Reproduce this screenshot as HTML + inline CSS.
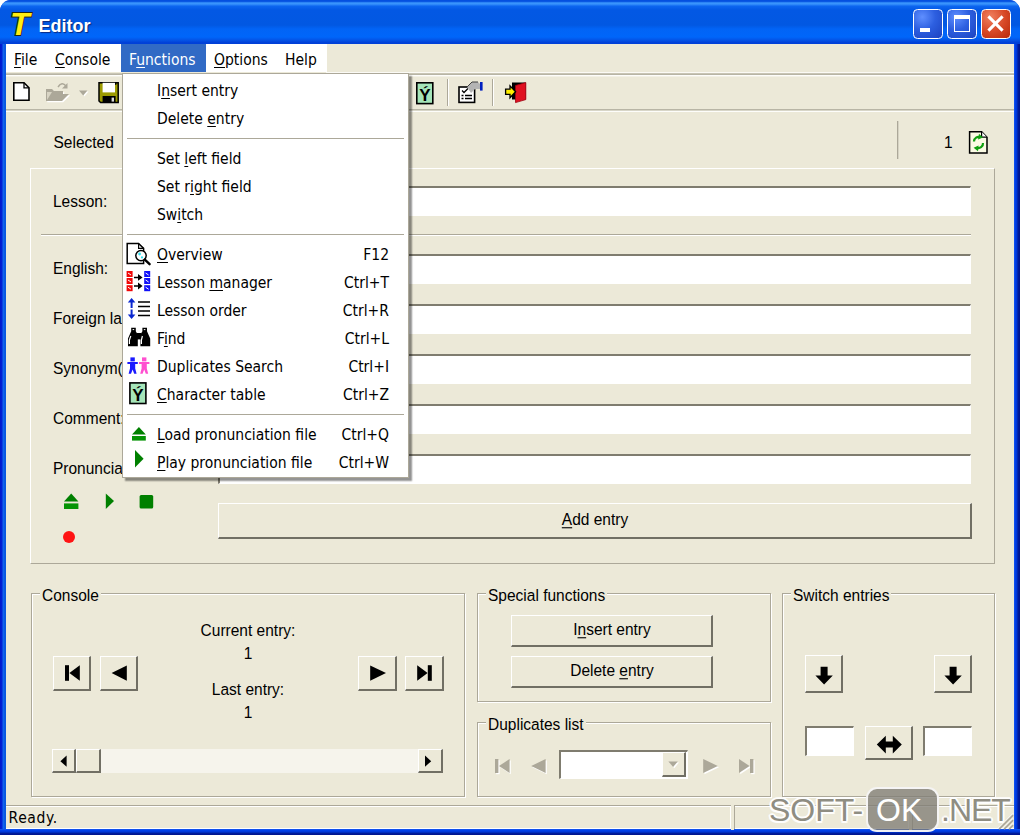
<!DOCTYPE html>
<html><head><meta charset="utf-8"><title>Editor</title>
<style>
html,body{margin:0;padding:0;}
body{width:1020px;height:835px;position:relative;overflow:hidden;background:#fff;font-family:"Liberation Sans",sans-serif;font-size:15.5px;color:#000;}
.abs,.abs *{position:absolute;}
#win{position:absolute;left:0;top:0;width:1020px;height:835px;background:#0842d8;border-radius:11px 11px 0 0;overflow:hidden;}
#bl{position:absolute;left:0;top:44px;width:6px;height:791px;background:linear-gradient(to right,#0019cf 0%,#0019cf 22%,#0c4ae4 45%,#1468ec 60%,#0858e2 78%,#0858e0 100%);}
#br{position:absolute;left:1014px;top:44px;width:6px;height:791px;background:linear-gradient(to right,#1858ee 0%,#0040ea 22%,#0036d4 45%,#001c9c 68%,#00138a 100%);}
#bb{position:absolute;left:0;top:829px;width:1020px;height:6px;background:linear-gradient(to bottom,#1858ee 0%,#0040ea 25%,#0036d4 50%,#001c9c 72%,#00138a 100%);}
#title{position:absolute;left:0;top:0;width:1020px;height:44px;background:linear-gradient(to bottom,#0450e0 0%,#0450e0 3%,#3894fc 6.5%,#3a94fc 9%,#0c66f0 14%,#0358e4 23%,#0258e2 57%,#0264f6 66%,#0066fa 84%,#0454e6 91%,#0040d8 97%,#0040d8 100%);}
#client{position:absolute;left:6px;top:44px;width:1008px;height:785px;background:#ece9d8;}
.t{position:absolute;white-space:nowrap;line-height:20px;height:20px;}
.mt{font-family:"DejaVu Sans Condensed","Liberation Sans",sans-serif;font-size:15.5px;}
u{text-decoration:underline;text-underline-offset:2px;}
.edit{position:absolute;background:#fff;border-top:2px solid #7f7c6f;border-left:2px solid #7f7c6f;border-right:1px solid #fff;border-bottom:1px solid #fff;box-sizing:border-box;}
.btn{position:absolute;box-sizing:border-box;background:#ece9d8;border-top:1px solid #fff;border-left:1px solid #fff;border-right:2px solid #716f64;border-bottom:2px solid #716f64;}
.grp{position:absolute;box-sizing:border-box;border:1px solid #aca899;box-shadow:1px 1px 0 #fff, inset 1px 1px 0 #fff;}
.grp>span{position:absolute;left:8px;top:-8px;background:#ece9d8;padding:0 2px;line-height:20px;}

.mi{position:relative;height:28px;line-height:28px;font-family:"DejaVu Sans Condensed","Liberation Sans",sans-serif;font-size:15.5px;white-space:nowrap;}
.mi .ml{position:absolute;left:34px;top:0px;}
.mi .mk{position:absolute;right:19px;top:0px;}
.msep{height:12px;position:relative;}
.msep:after{content:"";position:absolute;left:4px;right:4px;top:5px;height:1px;background:#aca899;}

.wb{position:absolute;top:9px;width:29.5px;height:30px;box-sizing:border-box;border:1.5px solid #fff;border-radius:4.5px;background:radial-gradient(circle at 30% 25%,#5f8fff 0%,#2d5fe0 45%,#1c42c0 100%);}
.wc{background:radial-gradient(circle at 30% 25%,#f08060 0%,#d84a28 50%,#b82808 100%);}

.wm{position:absolute;top:748px;font-family:"Liberation Sans",sans-serif;font-size:32px;line-height:36px;white-space:nowrap;color:#8f8d82;text-shadow:-1.5px -1.5px 0 rgba(255,255,255,.85),1.5px -1.5px 0 rgba(255,255,255,.85),-1.5px 1.5px 0 rgba(255,255,255,.85),1.5px 1.5px 0 rgba(255,255,255,.85),0 2px 0 rgba(255,255,255,.85),0 -2px 0 rgba(255,255,255,.85),2px 0 0 rgba(255,255,255,.85),-2px 0 0 rgba(255,255,255,.85);}

.t{transform:scaleY(1.1);transform-origin:0 15px;}
.grp>span{transform:scaleY(1.1);transform-origin:0 15px;}
.mt,#title .t{transform:none;}
</style></head><body>
<div id="win">
<div id="title">
 <svg style="position:absolute;left:8px;top:8px;" width="28" height="30" viewBox="0 0 28 30"><text x="2" y="27.4" font-family="Liberation Sans, sans-serif" font-weight="bold" font-style="italic" font-size="32" fill="#ffee10" stroke="#26260a" stroke-width="2" paint-order="stroke">T</text></svg>
 <div class="t" style="left:38.5px;top:16px;font-family:'Liberation Sans',sans-serif;font-weight:bold;font-size:18px;color:#fff;text-shadow:1px 1px 1px #0a2a80;">Editor</div>
 <div class="wb" style="left:913px;"><div style="position:absolute;left:6px;top:18px;width:10px;height:4px;background:#fff;"></div></div>
 <div class="wb" style="left:947px;"><div style="position:absolute;left:5.5px;top:5px;width:16px;height:16.5px;box-sizing:border-box;border:1.5px solid #fff;border-top-width:4.5px;"></div></div>
 <div class="wb wc" style="left:981px;"><svg style="position:absolute;left:0;top:0;" width="27" height="27" viewBox="0 0 27 27"><path d="M6.4,6.4 L20.6,20.6 M20.6,6.4 L6.4,20.6" stroke="#fff" stroke-width="3"/></svg></div>
</div>
<div id="bl"></div><div id="br"></div><div id="bb"></div>
<div id="client">
<!-- menubar -->
<div style="position:absolute;left:0;top:0;width:321px;height:28px;background:#fff;"></div>
<div style="position:absolute;left:115px;top:0px;width:85px;height:28px;background:#316ac5;"></div>
<div class="t mt" style="left:8px;top:6px;"><u>F</u>ile</div>
<div class="t mt" style="left:49px;top:6px;"><u>C</u>onsole</div>
<div class="t mt" style="left:123px;top:6px;color:#fff;">F<u>u</u>nctions</div>
<div class="t mt" style="left:208px;top:6px;"><u>O</u>ptions</div>
<div class="t mt" style="left:279px;top:6px;">Help</div>
<!-- toolbar lines -->
<div style="position:absolute;left:320px;top:28px;width:688px;height:1px;background:#fbfaf5;"></div>
<div style="position:absolute;left:0;top:29px;width:1008px;height:1px;background:#c8c5b5;"></div>
<div style="position:absolute;left:0;top:30px;width:1008px;height:1px;background:#b8b5a5;"></div>
<div style="position:absolute;left:0;top:31px;width:1008px;height:1px;background:#fdfdfa;"></div>
<div style="position:absolute;left:0;top:32px;width:1008px;height:1px;background:#f3f1e6;"></div>
<div style="position:absolute;left:0;top:65px;width:1008px;height:1px;background:#b8b5a5;"></div>
<div style="position:absolute;left:0;top:66px;width:1008px;height:1px;background:#d8d6c8;"></div>
<div style="position:absolute;left:0;top:67px;width:1008px;height:1px;background:#fdfdfa;"></div>
<div id="tb"></div>
<!-- selected row -->
<div class="t" style="left:47.5px;top:89px;">Selected</div>
<div style="position:absolute;left:891px;top:77px;width:1px;height:38px;background:#aca899;"></div><div style="position:absolute;left:892px;top:77px;width:1px;height:38px;background:#d6d3c4;"></div>
<div class="t" style="left:938px;top:89px;">1</div>
<!-- main panel -->
<div style="position:absolute;left:24px;top:124px;width:965px;height:396px;box-sizing:border-box;border-top:1px solid #fff;border-left:1px solid #fff;border-right:1px solid #aca899;border-bottom:1px solid #aca899;"></div>
<div style="position:absolute;left:35px;top:190px;width:930px;height:1px;background:#aca899;"></div>
<div style="position:absolute;left:35px;top:191px;width:930px;height:1px;background:#fff;"></div>
<div class="t" style="left:47px;top:148px;">Lesson:</div>
<div class="t" style="left:47px;top:215px;">English:</div>
<div class="t" style="left:47px;top:265px;">Foreign language:</div>
<div class="t" style="left:47px;top:315px;">Synonym(s):</div>
<div class="t" style="left:47px;top:365px;">Comment:</div>
<div class="t" style="left:47px;top:415px;">Pronunciation:</div>
<div class="edit" style="left:212px;top:142px;width:753px;height:30px;"></div>
<div class="edit" style="left:212px;top:210px;width:753px;height:30px;"></div>
<div class="edit" style="left:212px;top:260px;width:753px;height:30px;"></div>
<div class="edit" style="left:212px;top:310px;width:753px;height:30px;"></div>
<div class="edit" style="left:212px;top:360px;width:753px;height:30px;"></div>
<div class="edit" style="left:212px;top:410px;width:753px;height:30px;"></div>
<div class="btn" style="left:212px;top:459px;width:754px;height:36px;"></div>
<div class="t" style="left:212px;top:466px;width:754px;text-align:center;"><u>A</u>dd entry</div>
<!-- console group -->
<div class="grp" style="left:25px;top:549px;width:434px;height:204px;"><span>Console</span></div>
<div class="t" style="left:142px;top:577px;width:200px;text-align:center;">Current entry:</div>
<div class="t" style="left:142px;top:600px;width:200px;text-align:center;">1</div>
<div class="t" style="left:142px;top:636px;width:200px;text-align:center;">Last entry:</div>
<div class="t" style="left:142px;top:659px;width:200px;text-align:center;">1</div>
<div class="btn" style="left:47px;top:612px;width:38px;height:35px;"></div>
<div class="btn" style="left:94px;top:612px;width:38px;height:35px;"></div>
<div class="btn" style="left:352px;top:612px;width:39px;height:35px;"></div>
<div class="btn" style="left:399px;top:612px;width:39px;height:35px;"></div>
<!-- scrollbar -->
<div style="position:absolute;left:46px;top:705px;width:391px;height:24px;background:#f6f4ec;"></div>
<div class="btn" style="left:46px;top:705px;width:24px;height:24px;"></div>
<div class="btn" style="left:70px;top:705px;width:25px;height:24px;"></div>
<div class="btn" style="left:412px;top:705px;width:25px;height:24px;"></div>
<!-- special functions -->
<div class="grp" style="left:471px;top:549px;width:294px;height:109px;"><span>Special functions</span></div>
<div class="btn" style="left:505px;top:571px;width:202px;height:32px;"></div>
<div class="t" style="left:505px;top:576px;width:202px;text-align:center;">I<u>n</u>sert entry</div>
<div class="btn" style="left:505px;top:612px;width:202px;height:32px;"></div>
<div class="t" style="left:505px;top:617px;width:202px;text-align:center;">Delete <u>e</u>ntry</div>
<!-- duplicates -->
<div class="grp" style="left:471px;top:678px;width:294px;height:75px;"><span>Duplicates list</span></div>
<div class="edit" style="left:553px;top:706px;width:129px;height:29px;"></div>
<div class="btn" style="left:656px;top:708px;width:24px;height:25px;"></div>
<!-- switch entries -->
<div class="grp" style="left:776px;top:549px;width:213px;height:204px;"><span>Switch entries</span></div>
<div class="btn" style="left:799px;top:611px;width:38px;height:38px;"></div>
<div class="btn" style="left:928px;top:611px;width:38px;height:38px;"></div>
<div class="edit" style="left:799px;top:682px;width:49px;height:30px;"></div>
<div class="edit" style="left:917px;top:682px;width:49px;height:30px;"></div>
<div class="btn" style="left:859px;top:682px;width:48px;height:34px;"></div>
<!-- statusbar -->
<div style="position:absolute;left:0;top:761px;width:1008px;height:1px;background:#aca899;"></div>
<div style="position:absolute;left:0;top:762px;width:1008px;height:1px;background:#fff;"></div>
<div class="t mt" style="left:2.5px;top:764px;letter-spacing:0.65px;">Ready.</div>

<div id="ov" style="position:absolute;left:-6px;top:-44px;width:1020px;height:835px;pointer-events:none;">
<!-- toolbar: new -->
<svg style="position:absolute;left:12px;top:81px;" width="19" height="21" viewBox="0 0 19 21"><path d="M1.8,1.8 H12 L17,6.8 V19.2 H1.8 Z" fill="#fff" stroke="#000" stroke-width="1.6"/><path d="M12,1.8 V6.8 H17" fill="none" stroke="#000" stroke-width="1.3"/></svg>
<!-- toolbar: open (disabled) -->
<svg style="position:absolute;left:45px;top:81px;" width="26" height="22" viewBox="0 0 26 22">
<g fill="#fff" stroke="none" transform="translate(1.2,1.2)"><path d="M1,8 h6 l2,2 h9 v3 h6 l-7,7 h-16 z"/></g>
<g fill="#aca899"><path d="M1,8 h6 l2,2 h9 v3 h6 l-7,7 h-16 z"/></g>
<path d="M13,6 q4,-6 8,-1" fill="none" stroke="#aca899" stroke-width="1.5"/><path d="M22.5,2 v5.5 h-5.5 z" fill="#aca899"/>
<path d="M2,11 l5,0 l-5,8 z" fill="#d8d4c4"/>
</svg>
<svg style="position:absolute;left:79px;top:90px;" width="10" height="7" viewBox="0 0 10 7"><path d="M1.5,1.5 h8 l-4,5 z" fill="#fff"/><path d="M0,0.5 h8.4 l-4.2,5 z" fill="#aca899"/></svg>
<!-- toolbar: save -->
<svg style="position:absolute;left:98px;top:82px;" width="22" height="22" viewBox="0 0 22 22"><path d="M1,0.8 H20.2 V20.6 H2.6 L1,19 Z" fill="#9c9a00" stroke="#000" stroke-width="1.5"/><rect x="4.6" y="0.8" width="12.4" height="9.6" fill="#fff"/><rect x="17" y="0.8" width="1.4" height="2" fill="#000"/><rect x="4.6" y="14" width="13" height="6.6" fill="#000"/><rect x="13.6" y="15.6" width="2.4" height="4" fill="#d8d8d8"/></svg>
<!-- toolbar: char table -->
<svg style="position:absolute;left:415px;top:81px;" width="20" height="25" viewBox="0 0 20 25"><rect x="1.8" y="1.8" width="16" height="20.8" fill="#a5e5b9" stroke="#000" stroke-width="1.6"/><text x="9.8" y="19.8" text-anchor="middle" font-family="Liberation Sans, sans-serif" font-weight="bold" font-size="17" fill="#000">Ý</text></svg>
<div style="position:absolute;left:447px;top:79px;width:1px;height:27px;background:#aca899;"></div><div style="position:absolute;left:448px;top:79px;width:1px;height:27px;background:#fff;"></div>
<!-- toolbar: properties -->
<svg style="position:absolute;left:458px;top:81px;" width="26" height="23" viewBox="0 0 26 23"><rect x="1" y="6" width="15.6" height="15.4" fill="#fff" stroke="#000" stroke-width="1.6"/><path d="M3.5,17.5 h2 M7,17.5 h7 M3.5,14.5 h2 M7,14.5 h7" stroke="#000" stroke-width="1.3"/><path d="M4,9.5 l2,2 l4,-4" fill="none" stroke="#000" stroke-width="1.3"/><path d="M9,6 l5,-5 h6 l2,2 v5 h-5 l-4,4 z" fill="#b4b4b4"/><path d="M9,6 l5,-5 h6" fill="none" stroke="#404040" stroke-width="1"/><rect x="22" y="1" width="2.6" height="8.6" fill="#0020c0"/></svg>
<div style="position:absolute;left:492px;top:79px;width:1px;height:27px;background:#aca899;"></div><div style="position:absolute;left:493px;top:79px;width:1px;height:27px;background:#fff;"></div>
<!-- toolbar: exit -->
<svg style="position:absolute;left:504px;top:81px;" width="24" height="23" viewBox="0 0 24 23"><rect x="8" y="1.5" width="13.6" height="17" fill="#000"/><path d="M11.5,4.5 L21.8,1.6 V18.6 L11.5,21.6 Z" fill="#e01020" stroke="#a00010" stroke-width="0.8"/><path d="M1.6,8.2 h4.4 v-3.4 l5.6,6 l-5.6,6 v-3.4 h-4.4 z" fill="#ffee00" stroke="#000" stroke-width="1.3"/></svg>
<!-- refresh icon -->
<svg style="position:absolute;left:968px;top:130px;" width="21" height="25" viewBox="0 0 21 25"><path d="M1.6,1.8 H13.6 L19,7.2 V23 H1.6 Z" fill="#fbfbe4" stroke="#000" stroke-width="1.5"/><path d="M13.6,1.8 V7.2 H19" fill="#fff" stroke="#000" stroke-width="1.2"/><path d="M6,11.5 a4.6,4.6 0 0 1 6.5,-4.2" fill="none" stroke="#10a010" stroke-width="2.2"/><path d="M11,3.8 l4,3.6 l-5,2 z" fill="#10a010"/><path d="M15,13 a4.6,4.6 0 0 1 -6.5,4.6" fill="none" stroke="#10a010" stroke-width="2.2"/><path d="M10,21.2 l-4.4,-3.4 l5,-2.2 z" fill="#10a010"/></svg>
<!-- player icons -->
<svg style="position:absolute;left:63px;top:492px;" width="17" height="18" viewBox="0 0 17 18"><path d="M8.2,1.4 L15.4,9.6 H1 Z" fill="#008000"/><rect x="1" y="11.4" width="14.4" height="5.6" fill="#059405"/></svg>
<svg style="position:absolute;left:105px;top:492px;" width="10" height="18" viewBox="0 0 10 18"><path d="M0.8,1.4 L9,9 L0.8,17 Z" fill="#008000"/></svg>
<svg style="position:absolute;left:139px;top:494px;" width="15" height="15" viewBox="0 0 15 15"><rect x="0.6" y="1" width="13.6" height="13.6" rx="1.5" fill="#008000"/></svg>
<div style="position:absolute;left:63px;top:531px;width:12.4px;height:12.4px;border-radius:50%;background:#ff1414;"></div>
<!-- nav icons -->
<svg style="position:absolute;left:64px;top:664px;" width="17" height="18" viewBox="0 0 17 18"><rect x="1" y="1.2" width="4" height="15.6" fill="#000"/><path d="M15.8,1.2 V16.8 L5.4,9 Z" fill="#000"/></svg>
<svg style="position:absolute;left:111px;top:664px;" width="17" height="18" viewBox="0 0 17 18"><path d="M15.8,1.4 V16.8 L0.6,9.1 Z" fill="#000"/></svg>
<svg style="position:absolute;left:369px;top:664px;" width="18" height="18" viewBox="0 0 18 18"><path d="M1.2,1.4 V16.8 L17,9.1 Z" fill="#000"/></svg>
<svg style="position:absolute;left:416px;top:664px;" width="17" height="18" viewBox="0 0 17 18"><rect x="11.8" y="1.2" width="4" height="15.6" fill="#000"/><path d="M1.2,1.2 V16.8 L11.6,9 Z" fill="#000"/></svg>
<!-- scrollbar arrows -->
<svg style="position:absolute;left:60px;top:755px;" width="8" height="13" viewBox="0 0 8 13"><path d="M6.6,0.6 V11.8 L0.4,6.2 Z" fill="#000"/></svg>
<svg style="position:absolute;left:424px;top:755px;" width="8" height="13" viewBox="0 0 8 13"><path d="M1,0.6 V11.8 L7.2,6.2 Z" fill="#000"/></svg>
<!-- switch arrows -->
<svg style="position:absolute;left:815px;top:666px;" width="19" height="20" viewBox="0 0 19 20"><path d="M5.6,0.8 h7 v8.6 h5.2 l-8.7,9 l-8.7,-9 h5.2 z" fill="#000"/></svg>
<svg style="position:absolute;left:944px;top:666px;" width="19" height="20" viewBox="0 0 19 20"><path d="M5.6,0.8 h7 v8.6 h5.2 l-8.7,9 l-8.7,-9 h5.2 z" fill="#000"/></svg>
<svg style="position:absolute;left:876px;top:735px;" width="27" height="20" viewBox="0 0 27 20"><path d="M0.8,9.6 l9,-8.8 v5.8 h7 v-5.8 l9,8.8 l-9,8.8 v-5.8 h-7 v5.8 z" fill="#000"/></svg>
<!-- duplicates disabled icons -->
<svg style="position:absolute;left:494px;top:758px;" width="18" height="17" viewBox="0 0 18 17"><g transform="translate(1.2,1.2)" fill="#fff"><rect x="1" y="1" width="3.4" height="14"/><path d="M15.6,1 V15 L5,8 Z"/></g><g fill="#aca899"><rect x="1" y="1" width="3.4" height="14"/><path d="M15.6,1 V15 L5,8 Z"/></g></svg>
<svg style="position:absolute;left:530px;top:758px;" width="18" height="17" viewBox="0 0 18 17"><path d="M16.8,2.2 V16.2 L2.4,9.2 Z" fill="#fff"/><path d="M15.6,1 V15 L1.2,8 Z" fill="#aca899"/></svg>
<svg style="position:absolute;left:702px;top:758px;" width="19" height="17" viewBox="0 0 19 17"><path d="M2.4,2.2 V16.2 L17,9.2 Z" fill="#fff"/><path d="M1.2,1 V15 L15.8,8 Z" fill="#aca899"/></svg>
<svg style="position:absolute;left:738px;top:758px;" width="19" height="17" viewBox="0 0 19 17"><g transform="translate(1.2,1.2)" fill="#fff"><rect x="12" y="1" width="3.4" height="14"/><path d="M1,1 V15 L11.6,8 Z"/></g><g fill="#aca899"><rect x="12" y="1" width="3.4" height="14"/><path d="M1,1 V15 L11.6,8 Z"/></g></svg>
<svg style="position:absolute;left:668px;top:761px;" width="12" height="8" viewBox="0 0 12 8"><path d="M1.6,1.6 h9.4 l-4.7,5.6 z" fill="#fff"/><path d="M0.4,0.4 h9.4 l-4.7,5.6 z" fill="#aca899"/></svg>
</div>


<!-- statusbar panels -->
<div style="position:absolute;left:0;top:784px;width:1008px;height:1px;background:#fff;"></div>
<div style="position:absolute;left:724px;top:762px;width:1px;height:23px;background:#fff;"></div>
<div style="position:absolute;left:725px;top:761px;width:3px;height:25px;background:#ece9d8;"></div>
<div style="position:absolute;left:728px;top:762px;width:1px;height:23px;background:#aca899;"></div>
<div style="position:absolute;left:902px;top:762px;width:1px;height:23px;background:#fff;"></div>
<div style="position:absolute;left:903px;top:761px;width:3px;height:25px;background:#ece9d8;"></div>
<div style="position:absolute;left:906px;top:762px;width:1px;height:23px;background:#aca899;"></div>
<svg style="position:absolute;left:988px;top:766px;" width="20" height="20" viewBox="0 0 20 20"><path d="M19,5 L5,19 M19,10 L10,19 M19,15 L15,19" stroke="#aca899" stroke-width="2"/><path d="M19,3.4 L3.4,19 M19,8.4 L8.4,19 M19,13.4 L13.4,19" stroke="#fff" stroke-width="1"/></svg>
<!-- watermark -->
<div style="position:absolute;left:860px;top:743px;width:73px;height:45px;box-sizing:border-box;border:2px solid rgba(255,255,255,0.9);border-radius:11px;background:rgba(128,126,116,0.78);"></div>
<div class="wm" style="left:763px;">SOFT-</div>
<div class="wm" style="left:870px;color:#fff;text-shadow:none;">OK</div>
<div class="wm" style="left:935px;letter-spacing:-1px;">.NET</div>
<!-- dropdown menu -->
<div id="menu" style="position:absolute;left:116px;top:29px;width:287px;height:405px;box-sizing:border-box;background:#fff;border:1px solid #aca899;box-shadow:3px 3px 1.5px rgba(0,0,0,0.42);padding-top:3px;">
<div class="mi"><span class="ml">I<u>n</u>sert entry</span><span class="mk"></span></div>
<div class="mi"><span class="ml">Delete <u>e</u>ntry</span><span class="mk"></span></div>
<div class="msep"></div>
<div class="mi"><span class="ml">Set <u>l</u>eft field</span><span class="mk"></span></div>
<div class="mi"><span class="ml">Set r<u>i</u>ght field</span><span class="mk"></span></div>
<div class="mi"><span class="ml">Sw<u>i</u>tch</span><span class="mk"></span></div>
<div class="msep"></div>
<div class="mi"><span class="ml"><u>O</u>verview</span><span class="mk">F12</span></div>
<div class="mi"><span class="ml">Lesson <u>m</u>anager</span><span class="mk">Ctrl+T</span></div>
<div class="mi"><span class="ml">Lesson order</span><span class="mk">Ctrl+R</span></div>
<div class="mi"><span class="ml">F<u>i</u>nd</span><span class="mk">Ctrl+L</span></div>
<div class="mi"><span class="ml">Duplicates Search</span><span class="mk">Ctrl+I</span></div>
<div class="mi"><span class="ml"><u>C</u>haracter table</span><span class="mk">Ctrl+Z</span></div>
<div class="msep"></div>
<div class="mi"><span class="ml"><u>L</u>oad pronunciation file</span><span class="mk">Ctrl+Q</span></div>
<div class="mi"><span class="ml"><u>P</u>lay pronunciation file</span><span class="mk">Ctrl+W</span></div>
</div>
<div id="ov2" style="position:absolute;left:-6px;top:-44px;width:1020px;height:835px;pointer-events:none;">
<!-- overview -->
<svg style="position:absolute;left:126px;top:242px;" width="26" height="24" viewBox="0 0 26 24"><path d="M1.2,1.4 H12.6 L17.6,6.4 V21.4 H1.2 Z" fill="#fff" stroke="#000" stroke-width="1.5"/><path d="M12.6,1.4 V6.4 H17.6" fill="none" stroke="#000" stroke-width="1.2"/><circle cx="15" cy="13.6" r="5.2" fill="#fff" stroke="#000" stroke-width="1.5"/><circle cx="13.6" cy="12" r="1.4" fill="#30e0f0"/><circle cx="16" cy="15.4" r="1.1" fill="#30e0f0"/><path d="M18.8,17.6 L23.6,22.2" stroke="#000" stroke-width="2.4" stroke-linecap="round"/></svg>
<!-- lesson manager -->
<svg style="position:absolute;left:126px;top:270px;" width="26" height="22" viewBox="0 0 26 22"><g fill="#f00808"><rect x="0.6" y="1" width="6" height="6"/><rect x="0.6" y="8" width="6" height="6"/><rect x="0.6" y="15.2" width="6" height="6"/></g><g fill="#1010f8"><rect x="18.2" y="1" width="6" height="6"/><rect x="18.2" y="8" width="6" height="6"/><rect x="18.2" y="15.2" width="6" height="6"/></g><g stroke="#fff" stroke-width="1"><path d="M2,3 l3,2 M2,10 l3,2 M2,17.2 l3,2 M19.6,3 l3,2 M19.6,10 l3,2 M19.6,17.2 l3,2"/></g><path d="M8,7.4 h5 M8,16 h5" stroke="#000" stroke-width="1.5"/><path d="M12,4 l4.6,3.4 l-4.6,3.4 z M12,12.6 l4.6,3.4 l-4.6,3.4 z" fill="#000"/></svg>
<!-- lesson order -->
<svg style="position:absolute;left:127px;top:297px;" width="25" height="23" viewBox="0 0 25 23"><path d="M4.6,1 l3.8,4.6 h-2.8 v5.4 h-2 v-5.4 h-2.8 z" fill="#0a28d0"/><path d="M4.6,22 l3.8,-4.6 h-2.8 v-5 h-2 v5 h-2.8 z" fill="#0a28d0"/><path d="M11,5 h12 M11,9.5 h12 M11,14 h12 M11,18.5 h12" stroke="#000" stroke-width="1.4"/></svg>
<!-- find -->
<svg style="position:absolute;left:127px;top:327px;" width="25" height="21" viewBox="0 0 25 21"><path d="M4.2,0.8 h4.6 v3.4 l2,3.6 v11.4 h-9.8 v-7.6 l3.2,-7.4 z M20,0.8 h-4.6 v3.4 l-2,3.6 v11.4 h9.8 v-7.6 l-3.2,-7.4 z" fill="#000"/><rect x="10" y="6" width="4.4" height="6.4" fill="#000"/><path d="M3.8,9 l-1.4,4 v4 M15.4,9 l-1,4 v4" stroke="#fff" stroke-width="1.2" fill="none"/><path d="M5.6,2.6 h1.6 M16.8,2.6 h1.6" stroke="#fff" stroke-width="1"/></svg>
<!-- duplicates -->
<svg style="position:absolute;left:127px;top:357px;" width="24" height="18" viewBox="0 0 24 18"><g fill="#1a1aff"><rect x="3.4" y="0.4" width="4.4" height="4"/><path d="M0.4,5 h10.4 v2 h-2.6 v4.4 l1.4,5.4 h-2.4 l-1.6,-4.4 l-1.6,4.4 h-2.4 l1.4,-5.4 v-4.4 h-2.6 z"/></g><g fill="#ff50d0" transform="translate(11.6,0)"><rect x="3.4" y="0.4" width="4.4" height="4"/><path d="M0.4,5 h10.4 v2 h-2.6 v4.4 l1.4,5.4 h-2.4 l-1.6,-4.4 l-1.6,4.4 h-2.4 l1.4,-5.4 v-4.4 h-2.6 z"/></g></svg>
<!-- char table -->
<svg style="position:absolute;left:128px;top:381px;" width="20" height="25" viewBox="0 0 20 25"><rect x="1.9" y="1.9" width="16" height="20.6" fill="#a5e5b9" stroke="#000" stroke-width="1.6"/><text x="9.9" y="19.8" text-anchor="middle" font-family="Liberation Sans, sans-serif" font-weight="bold" font-size="17" fill="#000">Ý</text></svg>
<!-- eject / play -->
<svg style="position:absolute;left:131px;top:426px;" width="16" height="16" viewBox="0 0 16 16"><path d="M7.9,1 L14.8,8.4 H1 Z" fill="#008000"/><rect x="1" y="10" width="13.8" height="4.6" fill="#059405"/></svg>
<svg style="position:absolute;left:134px;top:449px;" width="11" height="20" viewBox="0 0 11 20"><path d="M1,1 L9.6,9.8 L1,18.6 Z" fill="#008000"/></svg>
</div>
</div>
</div>
</body></html>
